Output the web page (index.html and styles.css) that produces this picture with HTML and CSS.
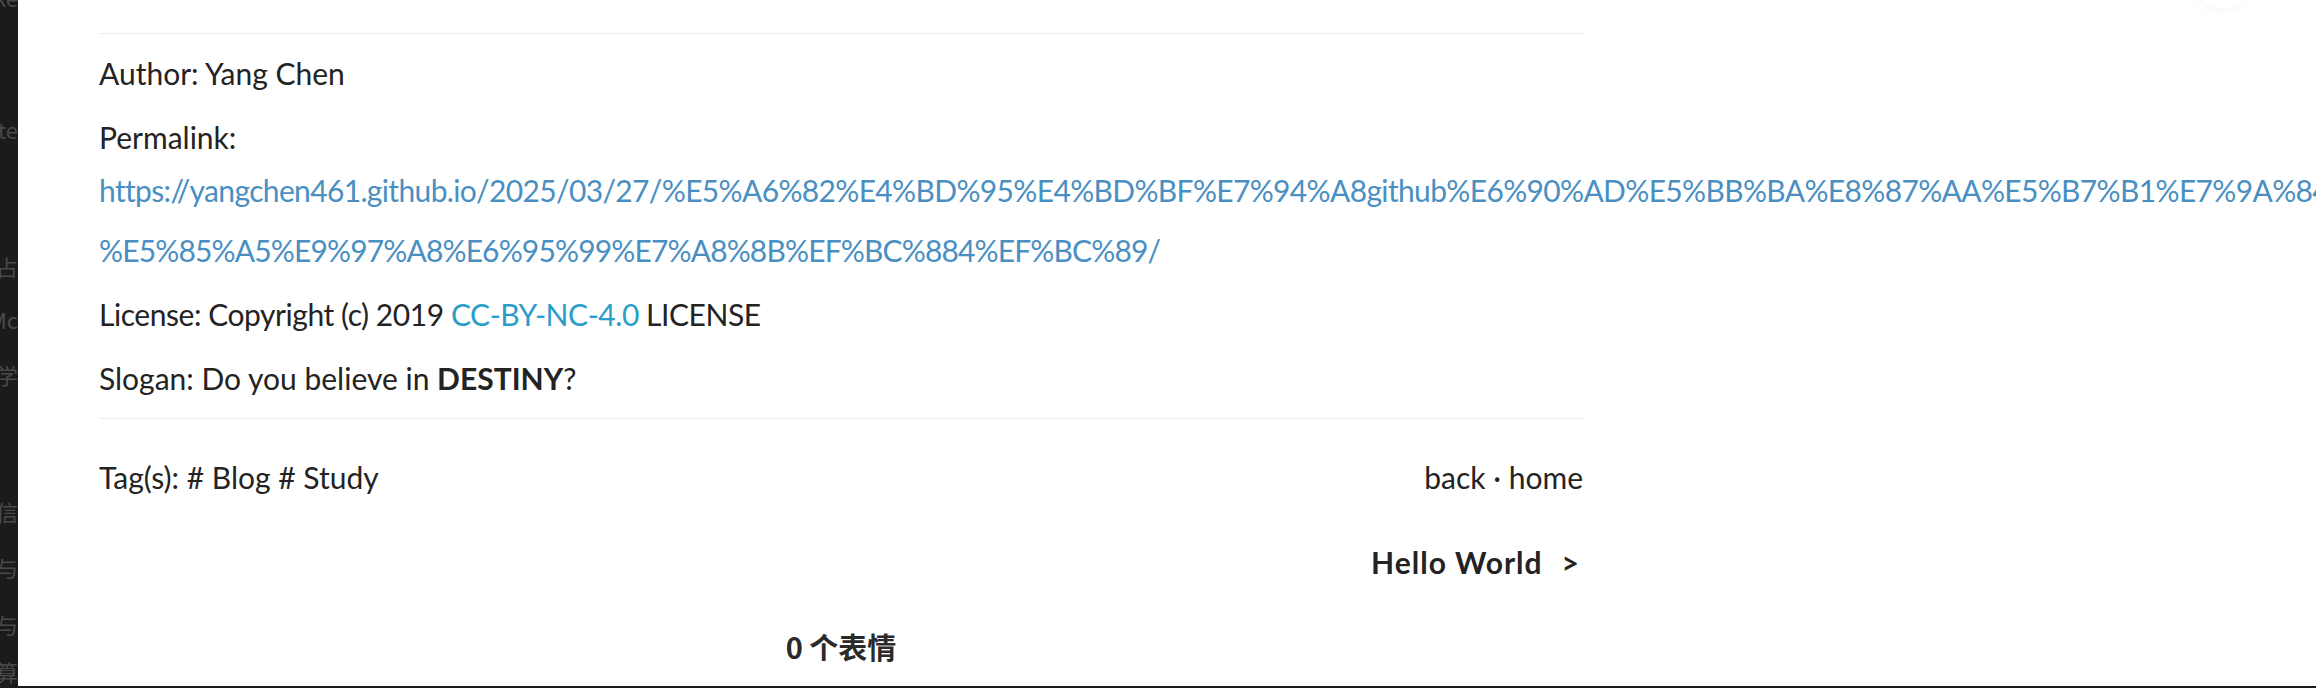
FILE: index.html
```html
<!DOCTYPE html>
<html lang="zh">
<head>
<meta charset="utf-8">
<title>Post footer</title>
<link rel="stylesheet" href="styles.css">
</head>
<body>
<div class="screen">
  <aside class="backdrop">
    <div class="ghost g1">ke</div>
    <div class="ghost g2">te</div>
    <div class="ghost g3">志占</div>
    <div class="ghost g4">Mc</div>
    <div class="ghost g5">(学</div>
    <div class="ghost g6">感信</div>
    <div class="ghost g7">完与</div>
    <div class="ghost g8">点与</div>
    <div class="ghost g9">果算</div>
  </aside>
  <main class="panel">
    <div class="fab"></div>
    <article class="content">
      <hr class="rule">
      <section class="copyright">
        <p class="row">Author: Yang Chen</p>
        <p class="row permalink-row">Permalink:
          <a class="permalink" href="#"><span class="ln ln1">https://yangchen461.github.io/2025/03/27/%E5%A6%82%E4%BD%95%E4%BD%BF%E7%94%A8github%E6%90%AD%E5%BB%BA%E8%87%AA%E5%B7%B1%E7%9A%84%E5%8D%9A%E5%AE%A2</span><span class="ln ln2">%E5%85%A5%E9%97%A8%E6%95%99%E7%A8%8B%EF%BC%884%EF%BC%89/</span></a>
        </p>
        <p class="row license">License: Copyright (c) 2019 <a class="cc" href="#">CC-BY-NC-4.0</a> LICENSE</p>
        <p class="row">Slogan: Do you believe in <strong>DESTINY</strong>?</p>
      </section>
      <hr class="rule">
      <div class="meta">
        <div class="tags">Tag(s): # Blog # Study</div>
        <div class="nav">back · home</div>
      </div>
      <div class="pager"><span class="next">Hello World</span><span class="arrow">&gt;</span></div>
      <div class="reactions">0 个表情</div>
    </article>
  </main>
</div>
</body>
</html>
```
FILE: styles.css
```css
html, body {
  margin: 0;
  padding: 0;
}
body {
  background: #1b1b1b;
  width: 2316px;
  height: 688px;
  overflow: hidden;
}
.screen {
  display: flex;
  height: 686px;
  overflow: hidden;
}
.backdrop {
  width: 18px;
  flex: 0 0 18px;
  overflow: hidden;
  display: flex;
  flex-direction: column;
  align-items: flex-end;
  font-family: "Noto Sans CJK SC", "Liberation Sans", sans-serif;
  font-size: 22px;
  line-height: 26px;
  color: #4a4a4a;
}
.ghost {
  white-space: nowrap;
  height: 26px;
}
.g1 { margin-top: -16px; }
.g2 { margin-top: 106px; }
.g3 { margin-top: 111px; }
.g4 { margin-top: 27px; }
.g5 { margin-top: 29px; }
.g6 { margin-top: 111px; }
.g7 { margin-top: 30px; }
.g8 { margin-top: 31px; }
.g9 { margin-top: 21px; }

.panel {
  flex: 1;
  background: #fff;
  position: relative;
  overflow: hidden;
  min-width: 0;
}
.fab {
  position: absolute;
  top: -56px;
  right: 62px;
  width: 64px;
  height: 64px;
  border-radius: 50%;
  background: #fff;
  box-shadow: 0 2px 12px rgba(0, 0, 0, 0.04);
}
.content {
  width: 1484px;
  margin-left: 81px;
  padding-top: 33px;
  font-family: "Lato", "Liberation Sans", sans-serif;
  font-size: 30px;
  line-height: 48px;
  color: #232323;
}
.rule {
  border: 0;
  border-top: 1px solid #ececec;
  margin: 0;
  height: 0;
}
.copyright {
  padding: 15px 0 16px;
}
.row {
  margin: 0 0 16px;
  white-space: nowrap;
}
.row:last-child {
  margin-bottom: 0;
}
.permalink-row {
  margin-bottom: 10px;
}
.permalink {
  display: block;
  color: #4a8fc2;
  text-decoration: none;
  line-height: 60px;
  margin-top: -1px;
}
.ln {
  display: block;
  white-space: nowrap;
}
.ln1 {
  letter-spacing: -0.65px;
}
.ln2 {
  letter-spacing: -0.85px;
}
.license {
  letter-spacing: -0.45px;
}
.cc {
  color: #2a9dc9;
  text-decoration: none;
}
strong {
  font-weight: 700;
}
.meta {
  display: flex;
  justify-content: space-between;
  margin-top: 34px;
}
.pager {
  display: flex;
  justify-content: flex-end;
  margin-top: 37px;
  font-weight: 700;
}
.next {
  letter-spacing: 1px;
}
.arrow {
  margin-left: 19px;
  margin-right: 4px;
}
.reactions {
  text-align: center;
  margin-top: 40px;
  font-family: "Noto Sans CJK SC", "Noto Sans", sans-serif;
  font-weight: 700;
  font-size: 29px;
  line-height: 40px;
  color: #2a2a2a;
}
```
